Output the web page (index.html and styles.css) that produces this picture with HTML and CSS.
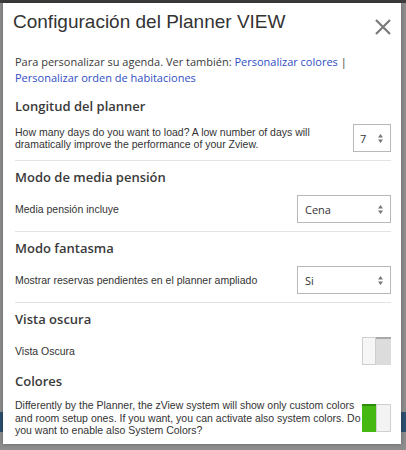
FILE: index.html
```html
<!DOCTYPE html>
<html lang="es">
<head>
<meta charset="UTF-8">
<meta name="viewport" content="width=device-width, initial-scale=1.0">
<title>Configuración del Planner VIEW</title>
<link rel="stylesheet" href="styles.css">
</head>
<body>
<div id="modal">
    <div class="modal-header">
        <h1>Configuración del Planner VIEW</h1>
        <svg class="close" width="16" height="16" viewBox="0 0 16 16">
            <path d="M1 1L15 15M15 1L1 15" stroke="#7a7a7a" stroke-width="2.2" fill="none"/>
        </svg>
    </div>
    <p class="intro">Para personalizar su agenda. Ver también: <a href="#">Personalizar colores</a> | <a href="#">Personalizar orden de habitaciones</a></p>

    <div class="section divided">
        <h2>Longitud del planner</h2>
        <div class="row">
            <div class="label">How many days do you want to load? A low number of days will dramatically improve the performance of your Zview.</div>
            <div class="select small"><span>7</span><svg width="5" height="9" viewBox="0 0 5 9"><path d="M2.5 0L5 3.5H0Z M2.5 9L5 5.5H0Z" fill="#777"/></svg></div>
        </div>
    </div>

    <div class="section divided">
        <h2>Modo de media pensión</h2>
        <div class="row">
            <div class="label">Media pensión incluye</div>
            <div class="select"><span>Cena</span><svg width="5" height="9" viewBox="0 0 5 9"><path d="M2.5 0L5 3.5H0Z M2.5 9L5 5.5H0Z" fill="#777"/></svg></div>
        </div>
    </div>

    <div class="section divided">
        <h2>Modo fantasma</h2>
        <div class="row">
            <div class="label">Mostrar reservas pendientes en el planner ampliado</div>
            <div class="select"><span>Si</span><svg width="5" height="9" viewBox="0 0 5 9"><path d="M2.5 0L5 3.5H0Z M2.5 9L5 5.5H0Z" fill="#777"/></svg></div>
        </div>
    </div>

    <div class="section">
        <h2>Vista oscura</h2>
        <div class="row">
            <div class="label">Vista Oscura</div>
            <div class="toggle off"><span class="knob-left"></span><span class="knob-right"></span></div>
        </div>
    </div>

    <div class="section">
        <h2>Colores</h2>
        <div class="row">
            <div class="label">Differently by the Planner, the zView system will show only custom colors and room setup ones. If you want, you can activate also system colors. Do you want to enable also System Colors?</div>
            <div class="toggle on"><span class="knob-left"></span><span class="knob-right"></span></div>
        </div>
    </div>
</div>
</body>
</html>
```

FILE: styles.css
```css
body {
    margin: 0;
    height: 450px;
    overflow: hidden;
    background: linear-gradient(to bottom, #3d3d3d 0 3px, #8d8d8d 3px 412px, #2c4f6e 412px 432px, #8d8d8d 432px);
    font-family: "Liberation Sans", Arial, sans-serif;
    color: #333;
}
#modal {
    margin: 3px 5px 0 3px;
    height: 441px;
    background-color: #fff;
    padding: 7px 10px 0 12px;
    box-sizing: border-box;
    box-shadow: 0 0 4px rgba(0, 0, 0, 0.3);
}
.modal-header {
    display: flex;
    justify-content: space-between;
    align-items: center;
    height: 24px;
}
h1 {
    margin: 0 0 0 -2px;
    font-size: 19px;
    line-height: 24px;
    font-weight: normal;
    color: #333;
}
.close {
    margin-top: 9px;
}
.intro {
    font-family: "Open Sans", sans-serif;
    font-size: 11px;
    line-height: 16px;
    margin: 20px 0 4px 0;
    color: #3a3a3a;
}
.intro a {
    color: #2f4fc4;
    text-decoration: none;
}
.section {
    padding: 7px 0 0 0;
}
.section.divided {
    padding-bottom: 8px;
    border-bottom: 1px solid #e3e3e3;
}
h2 {
    font-family: "Open Sans", sans-serif;
    font-size: 13px;
    line-height: 18px;
    font-weight: 600;
    margin: 0 0 9px 0;
    color: #3a3a3a;
}
.row {
    display: flex;
    align-items: center;
    min-height: 28px;
}
.label {
    flex: 1;
    font-size: 10.5px;
    line-height: 12.5px;
    color: #333;
}
.select {
    flex-shrink: 0;
    width: 94px;
    height: 28px;
    box-sizing: border-box;
    border: 1px solid #b8b8b8;
    display: flex;
    align-items: center;
    justify-content: space-between;
    padding: 0 7px 0 7px;
    font-family: "Open Sans", sans-serif;
    font-size: 11px;
    color: #333;
}
.select.small {
    width: 38px;
    padding-left: 6px;
}
.toggle {
    flex-shrink: 0;
    width: 29px;
    height: 28px;
    display: flex;
}
.toggle span {
    display: block;
    height: 100%;
    box-sizing: border-box;
}
.knob-left {
    width: 14px;
}
.knob-right {
    width: 15px;
}
.toggle.off .knob-left {
    background-color: #f6f6f6;
    border: 1px solid #cfcfcf;
}
.toggle.off .knob-right {
    background-color: #dcdcdc;
    border-top: 2px solid #a9a9a9;
}
.toggle.on .knob-left {
    background-color: #45b912;
    border-top: 2px solid #2f8c0b;
}
.toggle.on .knob-right {
    background-color: #f3f3f3;
    border: 1px solid #cfcfcf;
}
```
